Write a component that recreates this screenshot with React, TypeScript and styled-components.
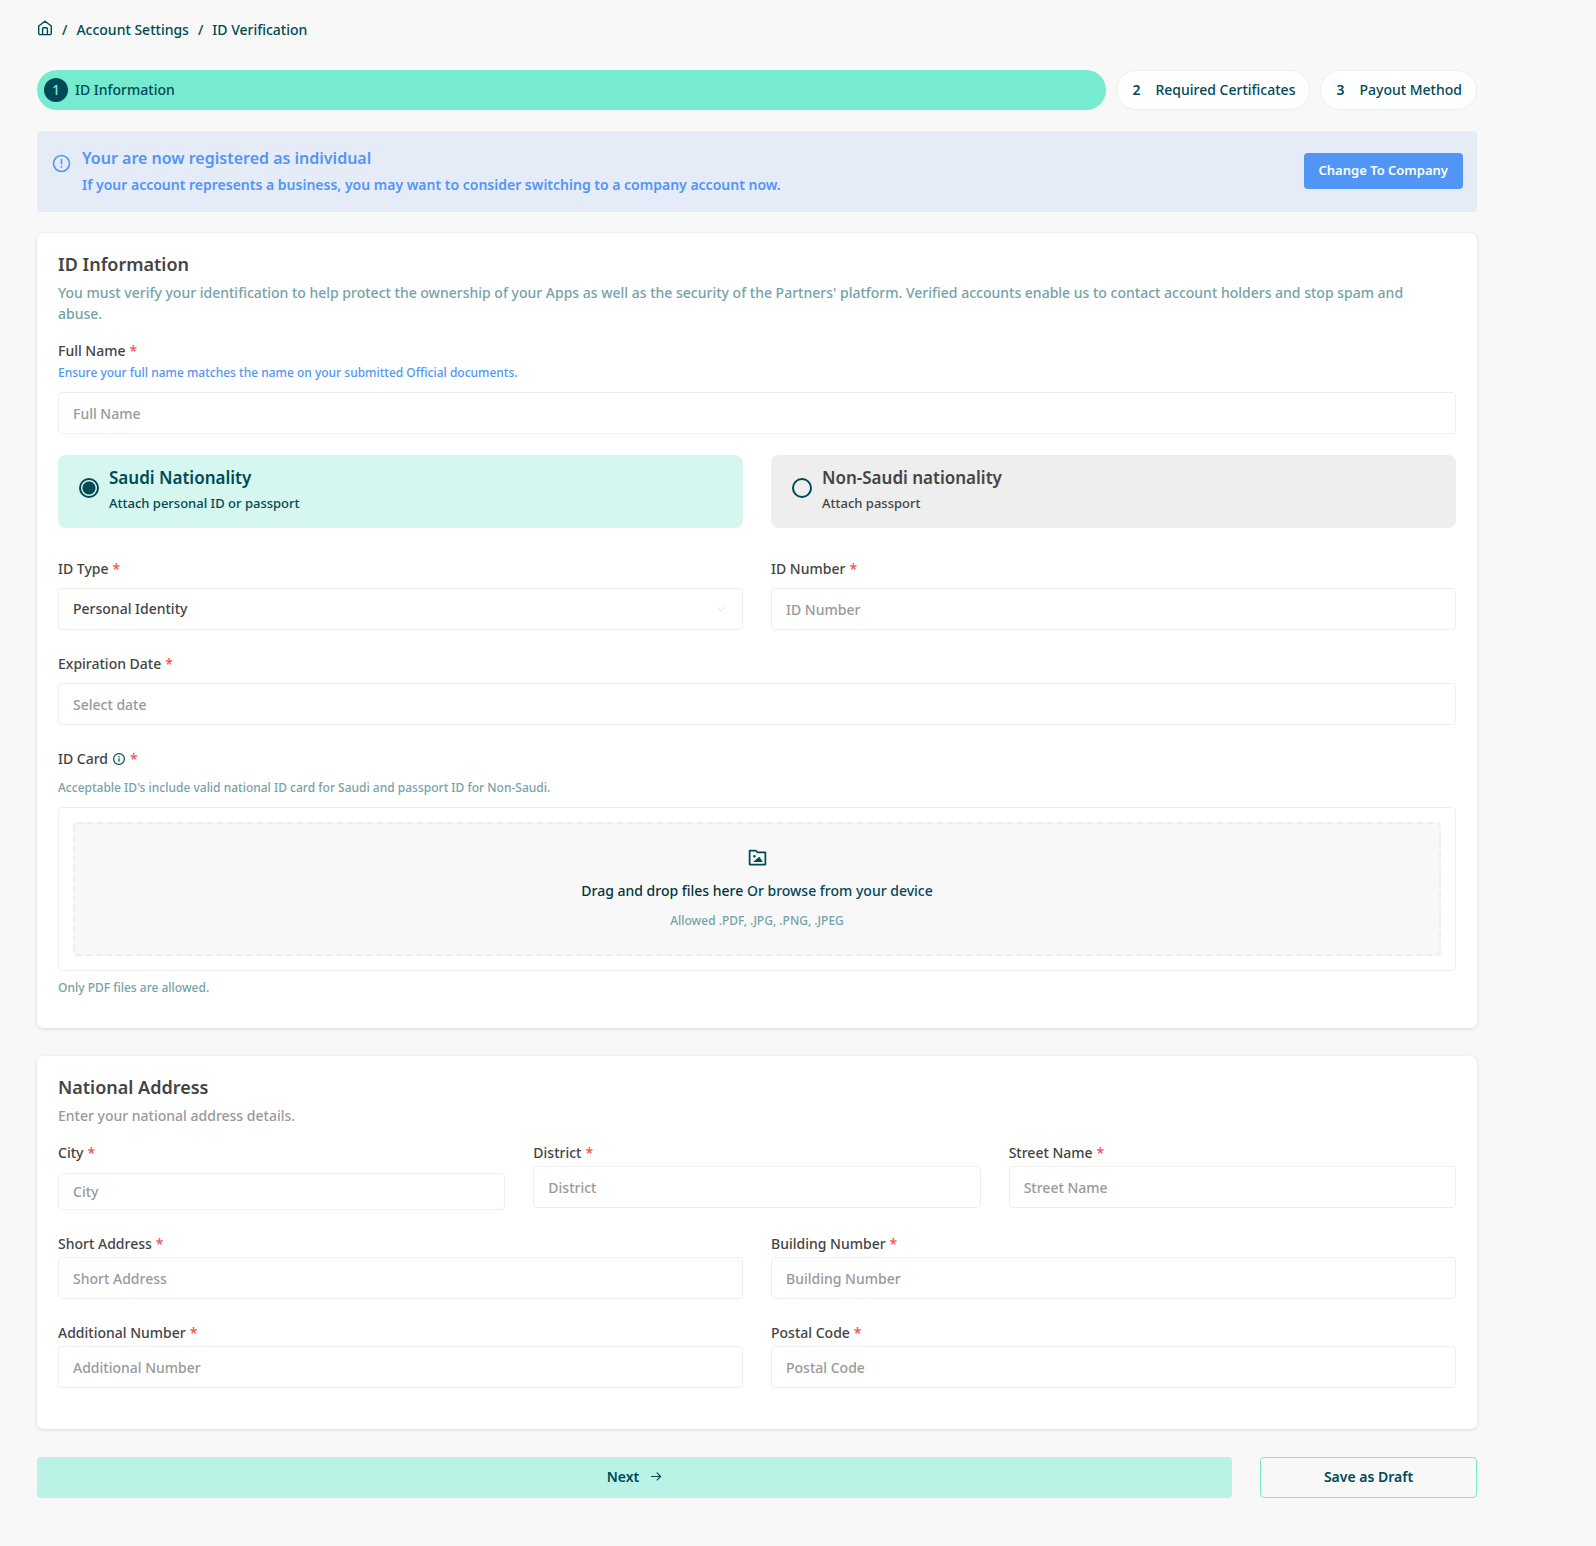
import React, { useId, useState } from "react";
import styled, { createGlobalStyle, css } from "styled-components";
import { RiFolderImageLine } from "react-icons/ri";

const color = {
  page: "#f8f8f8",
  ink: "#444444",
  muted: "#999999",
  line: "#eeeeee",
  teal: "#004956",
  tealSoft: "#76a2a8",
  mint: "#76ebcf",
  mintSoft: "#baf3e6",
  mintPale: "#d6f7ef",
  blue: "#5196f6",
  bluePale: "#e5ebf7",
  red: "#f55157",
};

const GlobalStyle = createGlobalStyle`
  *, *::before, *::after { box-sizing: border-box; }
  body {
    margin: 0;
    background: ${color.page};
    color: ${color.ink};
    font: 500 14px/21px "Noto Sans", "Open Sans", sans-serif;
  }
  h2, p, ol { margin: 0; padding: 0; }
  button, input, select { font: inherit; }
`;

const Page = styled.main`
  max-width: 1514px;
  padding: 19px 37px 48px;
  @media (min-width: 1500px) {
    width: calc(100% - 82px);
  }
`;

const Crumbs = styled.nav`
  display: flex;
  align-items: center;
  gap: 9px;
  color: ${color.teal};
  a {
    color: inherit;
    text-decoration: none;
  }
  svg {
    display: block;
    margin-bottom: 4px;
  }
`;

const Steps = styled.ol`
  display: flex;
  gap: 10px;
  margin-top: 30px;
  list-style: none;
`;

const Step = styled.li<{ $active?: boolean }>`
  display: flex;
  align-items: center;
  gap: 7px;
  height: 40px;
  padding: 0 14px 0 7px;
  border-radius: 20px;
  color: ${color.teal};
  white-space: nowrap;
  ${(p) =>
    p.$active
      ? css`
          flex: 1;
          background: ${color.mint};
        `
      : css`
          border: 1px solid ${color.line};
          background: #fff;
        `}
`;

const StepName = styled.span`
  padding-bottom: 2px;
`;

const StepNumber = styled.span<{ $active?: boolean }>`
  display: grid;
  place-items: center;
  width: 24px;
  height: 24px;
  padding-bottom: 2px;
  border-radius: 50%;
  font-weight: ${(p) => (p.$active ? 500 : 600)};
  background: ${(p) => (p.$active ? color.teal : "transparent")};
  color: ${(p) => (p.$active ? color.mint : color.teal)};
`;

const Notice = styled.section`
  display: flex;
  align-items: center;
  gap: 11px;
  margin-top: 21px;
  padding: 15px 14px 17px 15px;
  border-radius: 4px;
  background: ${color.bluePale};
  color: ${color.blue};
  svg {
    flex: none;
    align-self: flex-start;
    margin-top: 8px;
  }
`;

const NoticeText = styled.div`
  flex: 1;
  font-weight: 600;
`;

const NoticeTitle = styled.p`
  margin-bottom: 4px;
  font-size: 16px;
  line-height: 24px;
`;

const NoticeButton = styled.button`
  height: 36px;
  padding: 0 15px;
  border: 0;
  border-radius: 4px;
  background: ${color.blue};
  color: #fff;
  font-size: 13px;
  font-weight: 600;
`;

const Card = styled.section`
  margin-top: 21px;
  padding: 21px 21px 31px;
  border-radius: 7px;
  background: #fff;
  box-shadow: 0 1px 4px rgba(0, 0, 0, 0.12);
  & + & {
    margin-top: 28px;
    padding-bottom: 41px;
  }
`;

const CardTitle = styled.h2`
  margin-bottom: 8px;
  font-size: 18px;
  font-weight: 600;
  line-height: 20px;
`;

const Lead = styled.p<{ $muted?: boolean }>`
  margin-bottom: 16px;
  padding-right: 21px;
  color: ${(p) => (p.$muted ? color.muted : color.tealSoft)};
`;

const Small = styled.p`
  color: ${color.tealSoft};
  font-size: 12px;
  line-height: 18px;
`;

const Hint = styled(Small)`
  margin-top: 3px;
  color: ${color.blue};
`;

const Row = styled.div<{ $cols?: number }>`
  display: grid;
  grid-template-columns: repeat(${(p) => p.$cols ?? 1}, minmax(0, 1fr));
  align-items: start;
  gap: 28px;
  & + & {
    margin-top: 23px;
  }
`;

const Field = styled.div<{ $gap: number }>`
  display: flex;
  flex-direction: column;
  gap: ${(p) => p.$gap}px;
`;

const Label = styled.label`
  display: flex;
  align-items: center;
  gap: 4px;
`;

const Star = styled.span`
  color: ${color.red};
`;

const box = css`
  width: 100%;
  border: 1px solid ${color.line};
  border-radius: 4px;
  background: #fff;
`;

const Input = styled.input<{ $compact?: boolean }>`
  ${box}
  height: ${(p) => (p.$compact ? 37 : 42)}px;
  padding: 0 14px;
  color: ${color.ink};
  &::placeholder {
    color: ${color.muted};
    opacity: 1;
  }
`;

const SelectWrap = styled.div`
  display: grid;
  align-items: center;
  > * {
    grid-area: 1 / 1;
  }
  svg {
    justify-self: end;
    margin-right: 17px;
    pointer-events: none;
  }
`;

const Select = styled.select`
  ${box}
  height: 42px;
  padding: 0 14px 2px;
  appearance: none;
  color: ${color.ink};
`;

const Choices = styled.div`
  display: grid;
  grid-template-columns: 1fr 1fr;
  gap: 28px;
  margin: 21px 0 30px;
`;

const Choice = styled.label<{ $on: boolean }>`
  display: flex;
  align-items: flex-start;
  gap: 10px;
  padding: 12px 21px 16px;
  border-radius: 8px;
  background: ${(p) => (p.$on ? color.mintPale : color.line)};
  color: ${(p) => (p.$on ? color.teal : color.ink)};
`;

const Radio = styled.input`
  appearance: none;
  flex: none;
  width: 20px;
  height: 20px;
  margin: 11px 0 0;
  border: 2px solid ${color.teal};
  border-radius: 50%;
  &:checked {
    background: radial-gradient(circle, ${color.teal} 6px, transparent 7px);
  }
`;

const ChoiceTitle = styled.span`
  display: block;
  margin-bottom: 5px;
  font-size: 17px;
  font-weight: 600;
  line-height: 22px;
`;

const ChoiceNote = styled.span`
  display: block;
  font-size: 13px;
  line-height: 18px;
`;

const UploadFrame = styled.div`
  ${box}
  margin-bottom: 8px;
  padding: 14px;
`;

const DropZone = styled.label`
  display: flex;
  flex-direction: column;
  align-items: center;
  padding: 23px 0 24px;
  border: 2px dashed ${color.line};
  border-radius: 4px;
  background: ${color.page};
  color: ${color.teal};
  input {
    display: none;
  }
  svg {
    margin-bottom: 12px;
  }
  b {
    color: #02343d;
    font-weight: inherit;
  }
  p {
    margin-top: 11px;
  }
`;

const Actions = styled.div`
  display: flex;
  gap: 28px;
  margin-top: 28px;
`;

const Action = styled.button<{ $primary?: boolean }>`
  display: flex;
  align-items: center;
  justify-content: center;
  gap: 11px;
  height: 41px;
  padding: 0 0 3px;
  border-radius: 4px;
  color: ${color.teal};
  font-weight: 600;
  ${(p) =>
    p.$primary
      ? css`
          flex: 1;
          border: 0;
          background: ${color.mintSoft};
        `
      : css`
          flex: 0 0 217px;
          border: 1px solid ${color.mint};
          background: transparent;
        `}
`;

const HomeIcon = () => (
  <svg width="16" height="16" viewBox="0 0 16 16" fill="none" stroke="currentColor" strokeWidth="1.4" strokeLinejoin="round" aria-hidden="true">
    <path d="M1.7 6 8 1.2 14.3 6v7.3a1.3 1.3 0 0 1-1.3 1.3H3a1.3 1.3 0 0 1-1.3-1.3Z" />
    <path d="M5.6 14.4V8.6a.9.9 0 0 1 .9-.9h3a.9.9 0 0 1 .9.9v5.8" />
  </svg>
);

const AlertIcon = () => (
  <svg width="19" height="19" viewBox="0 0 19 19" fill="none" stroke="currentColor" strokeWidth="1.6" aria-hidden="true">
    <circle cx="9.5" cy="9.5" r="8" />
    <path d="M9.5 5v5.4M9.5 12v1.8" />
  </svg>
);

const InfoIcon = () => (
  <svg width="14" height="14" viewBox="0 0 14 14" fill="none" stroke={color.teal} strokeWidth="1.2" aria-hidden="true">
    <circle cx="7" cy="7" r="5.4" />
    <path d="M7 6.2v3.6M7 4v1.2" />
  </svg>
);

const ChevronIcon = () => (
  <svg width="10" height="6" viewBox="0 0 10 6" fill="none" stroke="#e2e2e2" strokeWidth="1" aria-hidden="true">
    <path d="m1 1 4 4 4-4" />
  </svg>
);

const ArrowIcon = () => (
  <svg width="12" height="12" viewBox="0 0 12 12" fill="none" stroke="currentColor" strokeWidth="1.2" aria-hidden="true">
    <path d="M1 6.5h9.4M6.8 2.7l3.8 3.8-3.8 3.8" />
  </svg>
);

type TextFieldProps = {
  label: string;
  placeholder?: string;
  gap?: number;
  compact?: boolean;
  hint?: string;
};

function TextField({ label, placeholder = label, gap = 3, compact, hint }: TextFieldProps) {
  const id = useId();
  return (
    <Field $gap={gap}>
      <div>
        <Label htmlFor={id}>
          {label} <Star>*</Star>
        </Label>
        {hint && <Hint>{hint}</Hint>}
      </div>
      <Input id={id} placeholder={placeholder} $compact={compact} />
    </Field>
  );
}

const nationalities = [
  { value: "saudi", title: "Saudi Nationality", note: "Attach personal ID or passport" },
  { value: "other", title: "Non-Saudi nationality", note: "Attach passport" },
];

const steps = ["ID Information", "Required Certificates", "Payout Method"];

export default function App() {
  const [nationality, setNationality] = useState("saudi");
  return (
    <>
      <GlobalStyle />
      <Page>
        <Crumbs aria-label="Breadcrumb">
          <a href="#home" aria-label="Home">
            <HomeIcon />
          </a>
          <span>/</span>
          <a href="#settings">Account Settings</a>
          <span>/</span>
          <span>ID Verification</span>
        </Crumbs>

        <Steps>
          {steps.map((name, i) => (
            <Step key={name} $active={i === 0}>
              <StepNumber $active={i === 0}>{i + 1}</StepNumber>
              <StepName>{name}</StepName>
            </Step>
          ))}
        </Steps>

        <Notice>
          <AlertIcon />
          <NoticeText>
            <NoticeTitle>Your are now registered as individual</NoticeTitle>
            <p>If your account represents a business, you may want to consider switching to a company account now.</p>
          </NoticeText>
          <NoticeButton type="button">Change To Company</NoticeButton>
        </Notice>

        <Card>
          <CardTitle>ID Information</CardTitle>
          <Lead>
            You must verify your identification to help protect the ownership of your Apps as well as the security of
            the Partners' platform. Verified accounts enable us to contact account holders and stop spam and abuse.
          </Lead>
          <TextField
            label="Full Name"
            gap={10}
            hint="Ensure your full name matches the name on your submitted Official documents."
          />
          <Choices role="radiogroup" aria-label="Nationality">
            {nationalities.map((n) => (
              <Choice key={n.value} $on={nationality === n.value}>
                <Radio
                  type="radio"
                  name="nationality"
                  checked={nationality === n.value}
                  onChange={() => setNationality(n.value)}
                />
                <span>
                  <ChoiceTitle>{n.title}</ChoiceTitle>
                  <ChoiceNote>{n.note}</ChoiceNote>
                </span>
              </Choice>
            ))}
          </Choices>
          <Row $cols={2}>
            <Field $gap={9}>
              <Label htmlFor="id-type">
                ID Type <Star>*</Star>
              </Label>
              <SelectWrap>
                <Select id="id-type">
                  <option>Personal Identity</option>
                  <option>Passport</option>
                </Select>
                <ChevronIcon />
              </SelectWrap>
            </Field>
            <TextField label="ID Number" gap={9} />
          </Row>
          <Row>
            <TextField label="Expiration Date" placeholder="Select date" gap={9} />
          </Row>
          <Row>
            <Field $gap={10}>
              <Label htmlFor="id-card">
                ID Card <InfoIcon /> <Star>*</Star>
              </Label>
              <Small>Acceptable ID's include valid national ID card for Saudi and passport ID for Non-Saudi.</Small>
              <div>
                <UploadFrame>
                  <DropZone>
                    <input id="id-card" type="file" />
                    <RiFolderImageLine size={21} />
                    <span>
                      <b>Drag and drop files here</b> Or browse from your device
                    </span>
                    <Small>Allowed .PDF, .JPG, .PNG, .JPEG</Small>
                  </DropZone>
                </UploadFrame>
                <Small>Only PDF files are allowed.</Small>
              </div>
            </Field>
          </Row>
        </Card>

        <Card>
          <CardTitle>National Address</CardTitle>
          <Lead $muted>Enter your national address details.</Lead>
          <Row $cols={3}>
            <TextField label="City" gap={10} compact />
            <TextField label="District" />
            <TextField label="Street Name" />
          </Row>
          <Row $cols={2}>
            <TextField label="Short Address" />
            <TextField label="Building Number" />
          </Row>
          <Row $cols={2}>
            <TextField label="Additional Number" />
            <TextField label="Postal Code" />
          </Row>
        </Card>

        <Actions>
          <Action type="button" $primary>
            Next <ArrowIcon />
          </Action>
          <Action type="button">Save as Draft</Action>
        </Actions>
      </Page>
    </>
  );
}
